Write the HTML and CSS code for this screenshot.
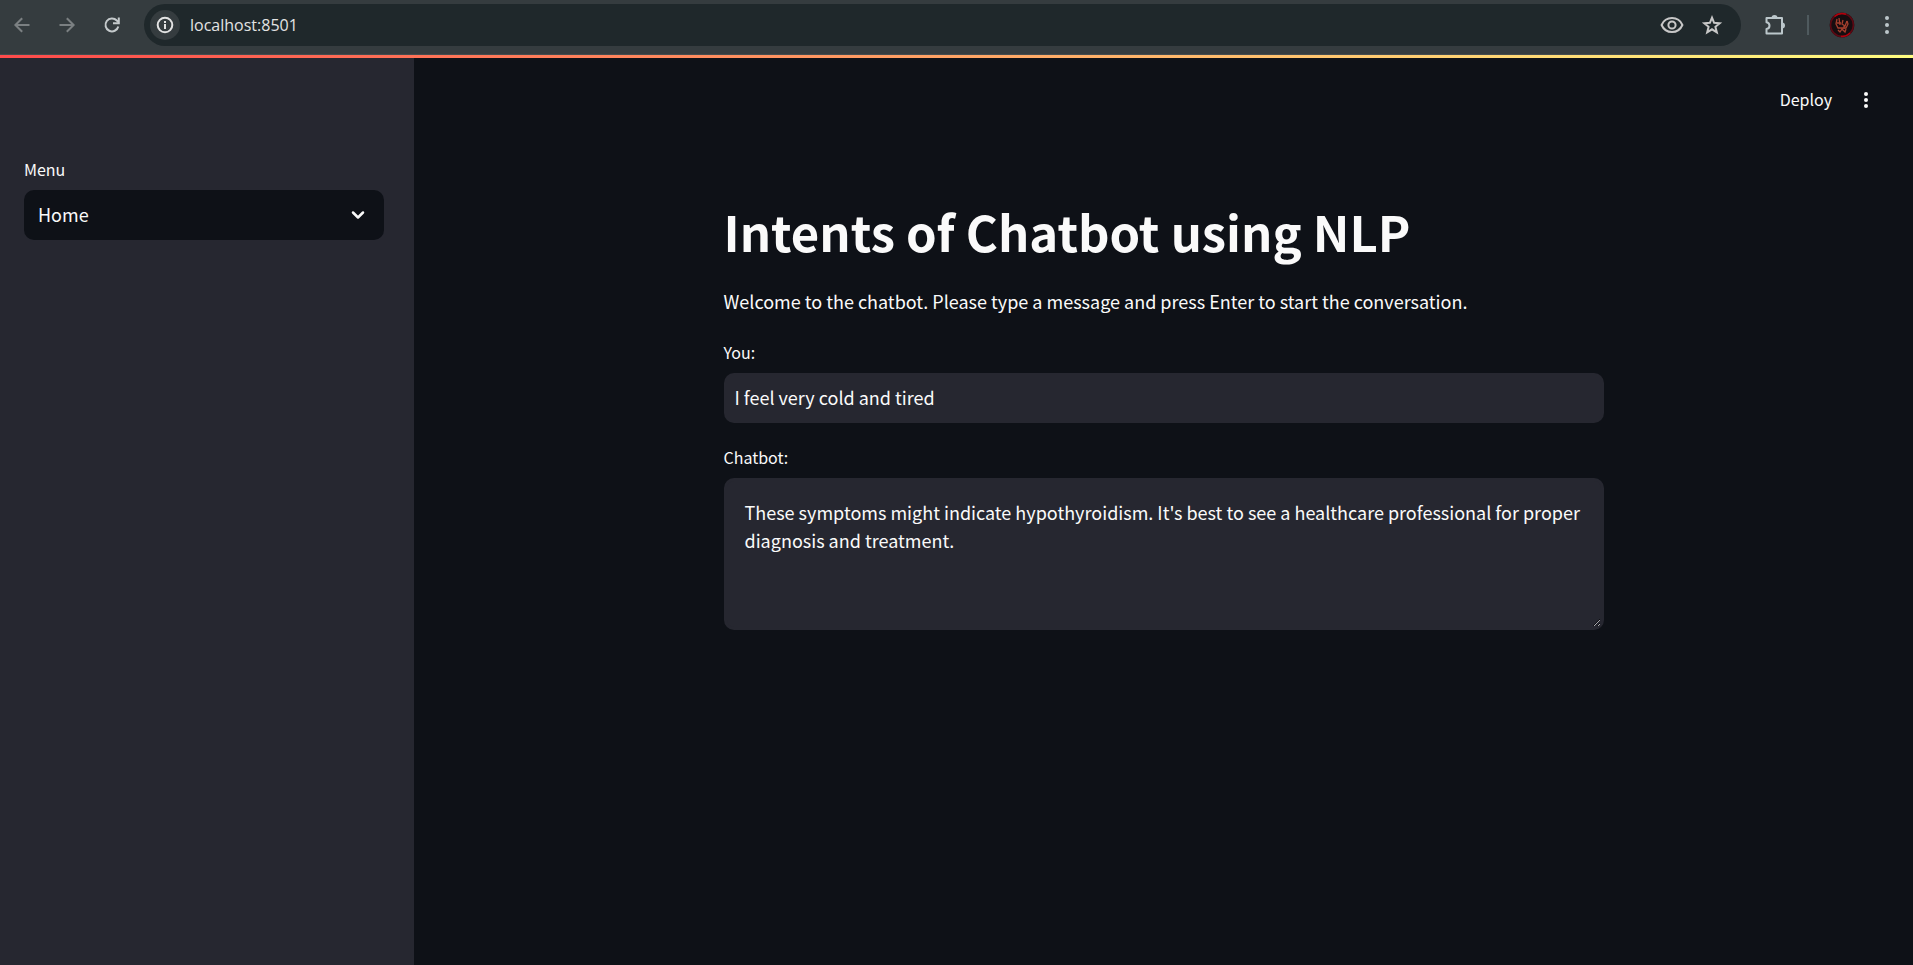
FILE: index.html
```html
<!DOCTYPE html>
<html lang="en">
<head>
<meta charset="utf-8">
<meta name="viewport" content="width=device-width, initial-scale=1">
<title>Intents of Chatbot using NLP</title>
<link rel="stylesheet" href="styles.css">
</head>
<body>
<header class="browser">
  <nav class="browser-nav" aria-label="History">
    <button class="icon-btn dim" aria-label="Back"><svg width="20" height="20" viewBox="0 0 20 20" fill="none" stroke="currentColor" stroke-width="2"><path d="M17.5 10H4M10.2 3.2 3.4 10l6.8 6.8"/></svg></button>
    <button class="icon-btn dim" aria-label="Forward"><svg width="20" height="20" viewBox="0 0 20 20" fill="none" stroke="currentColor" stroke-width="2"><path d="M2.500 10H16M9.800 3.200l6.800 6.800-6.800 6.800"/></svg></button>
    <button class="icon-btn" aria-label="Reload"><svg width="20" height="20" viewBox="0 0 20 20" fill="none" stroke="currentColor" stroke-width="2"><path d="M16.300 11.500A6.500 6.500 0 1 1 14.800 5.500L16.300 7"/><path d="M16.800 2.500v5.800H11"/></svg></button>
  </nav>
  <div class="address">
    <button class="site-info" aria-label="Site information"><svg width="18" height="18" viewBox="0 0 18 18" fill="none" stroke="currentColor" stroke-width="2"><circle cx="9" cy="9" r="7.300"/><path d="M9 8v5M9 5v2"/></svg></button>
    <input class="url" type="text" value="localhost:8501" aria-label="Address" spellcheck="false">
    <button class="icon-btn pale" aria-label="Preview"><svg width="24" height="24" viewBox="0 0 24 24" fill="none" stroke="currentColor" stroke-width="2"><path d="M1.600 12C3.500 7.600 7.400 5 12 5s8.500 2.600 10.400 7c-1.900 4.400-5.800 7-10.400 7S3.500 16.400 1.600 12z"/><circle cx="12" cy="12" r="3.600"/></svg></button>
    <button class="icon-btn pale" aria-label="Bookmark"><svg width="24" height="24" viewBox="0 0 24 24" fill="none" stroke="currentColor" stroke-width="2"><path d="m12 4.600 2.100 5.200 5.600.400-4.300 3.600 1.400 5.500L12 16.300l-4.800 3 1.400-5.500-4.300-3.600 5.600-.400z"/></svg></button>
  </div>
  <div class="browser-tools">
    <button class="icon-btn tool" aria-label="Extensions"><svg width="24" height="24" viewBox="0 0 24 24"><path fill="none" stroke="currentColor" stroke-width="2" stroke-linejoin="round" d="M3.500 5H19v15.500H3.500V16c4-.700 4-6 0-6.700z"/><path fill="currentColor" d="M8.500 5a3 3 0 0 1 6 0zM19 9.500a3 3 0 0 1 0 6z"/></svg></button>
    <span class="divider"></span>
    <button class="icon-btn profile" aria-label="Profile"><svg width="26" height="26" viewBox="0 0 26 26" fill="none"><circle cx="13" cy="13" r="12.300" fill="#160d10"/><circle cx="13" cy="13" r="11.400" stroke="#5c0812" stroke-width="1.600"/><path d="M5.500 4.500A11.400 11.400 0 0 1 17 2.300M12 24.400a11.400 11.400 0 0 0 9-3.400" stroke="#b3000c" stroke-width="1.600"/><path d="M8 7l-1 5 2 4h8l2-4-1-3M10 6l1 7M14 8l-1 4 3 2 2-5M8 11h4M9 18l2 2 2-3 3 3 1-3M15 14v3" stroke="#a5402e" stroke-width="1.300"/></svg></button>
    <button class="icon-btn tool" aria-label="Browser menu"><svg width="24" height="24" viewBox="0 0 24 24" fill="currentColor"><circle cx="12" cy="5" r="2"/><circle cx="12" cy="12" r="2"/><circle cx="12" cy="19" r="2"/></svg></button>
  </div>
</header>
<div class="decoration"></div>
<div class="app">
  <aside class="sidebar">
    <label class="label" for="menu">Menu</label>
    <div class="select-wrap">
      <select class="field select" id="menu"><option>Home</option></select>
      <svg class="chevron" width="20" height="20" viewBox="0 0 20 20" fill="none" stroke="currentColor" stroke-width="2.500" stroke-linecap="round" stroke-linejoin="round"><path d="m5 7.500 5 5 5-5"/></svg>
    </div>
  </aside>
  <div class="content">
    <header class="toolbar">
      <button class="deploy">Deploy</button>
      <button class="icon-btn" aria-label="Main menu"><svg width="20" height="20" viewBox="0 0 20 20" fill="currentColor"><circle cx="10" cy="4" r="2"/><circle cx="10" cy="10" r="2"/><circle cx="10" cy="16" r="2"/></svg></button>
    </header>
    <main class="main">
      <h1 class="title">Intents of Chatbot using NLP</h1>
      <p class="intro">Welcome to the chatbot. Please type a message and press Enter to start the conversation.</p>
      <div class="form-row">
        <label class="label" for="you">You:</label>
        <input class="field text-input" id="you" type="text" value="I feel very cold and tired" spellcheck="false">
      </div>
      <div class="form-row">
        <label class="label" for="bot">Chatbot:</label>
        <textarea class="field reply" id="bot" spellcheck="false">These symptoms might indicate hypothyroidism. It's best to see a healthcare professional for proper diagnosis and treatment.</textarea>
      </div>
    </main>
  </div>
</div>
</body>
</html>
```
FILE: styles.css
```css
*, *::before, *::after { box-sizing: border-box; }

body {
  margin: 0;
  min-height: 100vh;
  display: flex;
  flex-direction: column;
  background: #0e1117;
  color: #fafafa;
  color-scheme: dark;
  font-family: "Noto Sans CJK SC", "Open Sans", sans-serif;
  font-size: 18px;
  line-height: 28px;
}

button, input, select, textarea { font: inherit; color: inherit; }

button {
  border: 0;
  padding: 0;
  background: none;
}

svg { display: block; }

.browser {
  display: flex;
  align-items: center;
  height: 55px;
  padding: 0 14px 4px 12px;
  background: #353c3f;
  border-bottom: 1px solid #454c4f;
}

.browser-nav {
  display: flex;
  gap: 25px;
  color: #c5cacc;
}

.icon-btn { flex: none; }
.dim { color: #7b8082; }
.pale { color: #c7c7c7; }
.tool { color: #bcc7cb; }

.address {
  flex: 1;
  display: flex;
  align-items: center;
  gap: 16px;
  height: 42px;
  margin-left: 22px;
  padding: 0 17px 0 6px;
  border-radius: 21px;
  background: #1f282b;
}

.site-info {
  display: grid;
  place-items: center;
  width: 30px;
  height: 30px;
  border-radius: 50%;
  background: #353c3f;
  color: #e3e3e3;
}

.url {
  flex: 1;
  min-width: 0;
  margin: 0 -8px 0 -6px;
  padding: 0;
  border: 0;
  outline: 0;
  background: none;
  color: #e3e3e3;
  font-family: "Open Sans", "Noto Sans", sans-serif;
  font-size: 16px;
}

.browser-tools {
  display: flex;
  align-items: center;
  margin-left: 22px;
}

.divider {
  width: 2px;
  height: 20px;
  margin: 0 20px;
  background: #4f5a5e;
}

.profile { margin-right: 20px; }

.decoration {
  height: 3px;
  background: linear-gradient(90deg, #ff4b4b, #fffd80);
}

.app {
  flex: 1;
  display: flex;
}

.sidebar {
  flex: none;
  width: 414px;
  padding: 99px 30px 24px 24px;
  background: #262730;
}

.label {
  display: block;
  margin-bottom: 9px;
  font-size: 16px;
  line-height: 24px;
}

.field {
  display: block;
  width: 100%;
  height: 50px;
  margin: 0;
  border: 0;
  border-radius: 10px;
  outline: 0;
  background: #262730;
}

.select-wrap { position: relative; }

.select {
  appearance: none;
  padding: 0 40px 2px 14px;
  background: #0e1117;
}

.chevron {
  position: absolute;
  top: 15px;
  right: 16px;
  pointer-events: none;
}

.content {
  flex: 1;
  min-width: 0;
}

.toolbar {
  display: flex;
  align-items: center;
  justify-content: flex-end;
  gap: 24px;
  height: 84px;
  padding-right: 37px;
}

.deploy {
  padding-bottom: 2px;
  font-size: 16px;
  line-height: 24px;
}

.main {
  display: flex;
  flex-direction: column;
  max-width: 880px;
  margin: 56px auto 0;
}

.title {
  margin: 0 0 23px;
  font-size: 49px;
  font-weight: 700;
  line-height: 66px;
}

.intro { margin: 0 0 25px; }

.form-row { margin-bottom: 22px; }

.text-input { padding: 0 11px 2px; }

.reply {
  height: 152px;
  padding: 17px 18px;
  border: 3px solid #262730;
  resize: vertical;
}
```
